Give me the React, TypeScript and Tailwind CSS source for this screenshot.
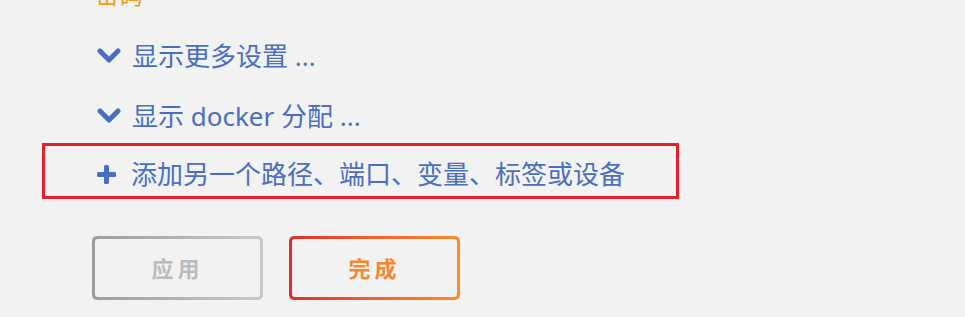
const font = { fontFamily: '"Noto Sans", "Noto Sans CJK SC", sans-serif' };

const Chevron = () => (
  <svg width="24" height="16" viewBox="0 0 24 16" className="shrink-0">
    <polyline points="3,3 12,12 21,3" fill="none" stroke="#4a6fbf" strokeWidth="5" strokeLinecap="round" strokeLinejoin="round" />
  </svg>
);

const PlusIcon = () => (
  <svg width="19" height="19" viewBox="0 0 19 19" className="shrink-0">
    <rect x="7" y="0" width="5" height="19" rx="1.5" fill="#4a6fbf" />
    <rect x="0" y="7" width="19" height="5" rx="1.5" fill="#4a6fbf" />
  </svg>
);

const Toggle = ({ label }: { label: string }) => (
  <div className="flex h-[60px] items-center gap-[11px] pl-[97px] text-[26px] text-[#4a6fbf]">
    <Chevron />
    <span>{label}</span>
  </div>
);

export default function App() {
  return (
    <div className="h-[317px] w-full overflow-hidden bg-[#f2f2f2]" style={font}>
      <div className="-mt-[21px] h-[32px] pl-[95px] text-[24px] leading-[32px] text-[#f39c12]">
        密码
      </div>
      <div className="mt-[15px]">
        <Toggle label="显示更多设置 ..." />
        <Toggle label="显示 docker 分配 ..." />
      </div>
      <div className="ml-[42px] mt-[-3px] flex h-[56px] w-[637px] items-end border-[3px] border-[#e5202a] pb-[2px]">
        <div className="flex items-center gap-[15px] pl-[52px] text-[26px] text-[#4a6fbf]">
          <PlusIcon />
          <span>添加另一个路径、端口、变量、标签或设备</span>
        </div>
      </div>
      <div className="mt-[37px] flex gap-[26px] pl-[92px]">
        <div className="rounded-[5px] bg-gradient-to-r from-[#9c9c9c] to-[#cacaca] p-[3px]">
          <div className="flex h-[58px] w-[165px] items-center justify-center rounded-[3px] bg-[#f2f2f2] text-[22px] font-bold tracking-[4px] text-[#bbbbbb]">
            应用
          </div>
        </div>
        <div className="rounded-[5px] bg-gradient-to-r from-[#e22a2a] to-[#ff8c2a] p-[3px]">
          <div className="flex h-[58px] w-[165px] items-center justify-center rounded-[3px] bg-[#f2f2f2] text-[22px] font-bold tracking-[4px] text-[#f8862c]">
            完成
          </div>
        </div>
      </div>
    </div>
  );
}
